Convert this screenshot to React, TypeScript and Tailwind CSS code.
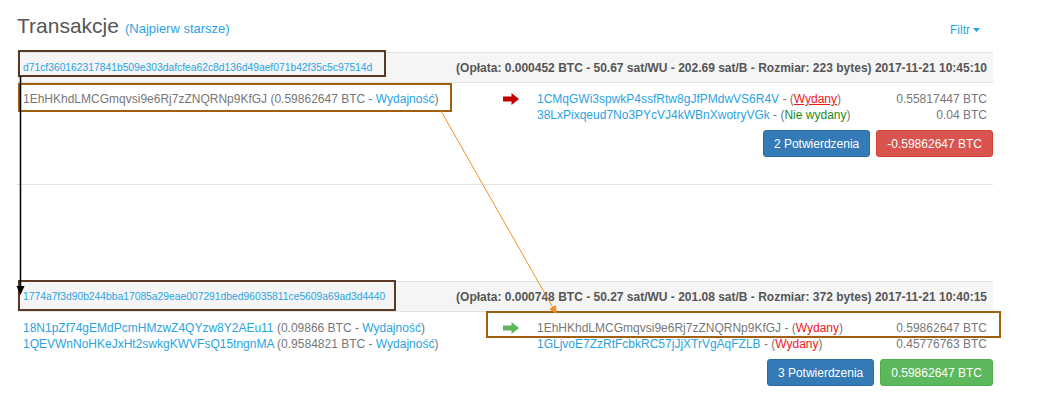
import React from "react";

const LINK = "text-[#2aa3e3]";

type Output = {
  address: string;
  link: boolean;
  spent: boolean;
  underline?: boolean;
  amount: string;
};

type Tx = {
  hash: string;
  meta: string;
  inputs: { address: string; link: boolean; value: string }[];
  outputs: Output[];
  confirmations: string;
  total: string;
  positive: boolean;
};

const TXS: Tx[] = [
  {
    hash: "d71cf360162317841b509e303dafcfea62c8d136d49aef071b42f35c5c97514d",
    meta: "(Opłata: 0.000452 BTC - 50.67 sat/WU - 202.69 sat/B - Rozmiar: 223 bytes) 2017-11-21 10:45:10",
    inputs: [{ address: "1EhHKhdLMCGmqvsi9e6Rj7zZNQRNp9KfGJ", link: false, value: "0.59862647" }],
    outputs: [
      { address: "1CMqGWi3spwkP4ssfRtw8gJfPMdwVS6R4V", link: true, spent: true, underline: true, amount: "0.55817447 BTC" },
      { address: "38LxPixqeud7No3PYcVJ4kWBnXwotryVGk", link: true, spent: false, amount: "0.04 BTC" },
    ],
    confirmations: "2 Potwierdzenia",
    total: "-0.59862647 BTC",
    positive: false,
  },
  {
    hash: "1774a7f3d90b244bba17085a29eae007291dbed96035811ce5609a69ad3d4440",
    meta: "(Opłata: 0.000748 BTC - 50.27 sat/WU - 201.08 sat/B - Rozmiar: 372 bytes) 2017-11-21 10:40:15",
    inputs: [
      { address: "18N1pZf74gEMdPcmHMzwZ4QYzw8Y2AEu11", link: true, value: "0.09866" },
      { address: "1QEVWnNoHKeJxHt2swkgKWVFsQ15tngnMA", link: true, value: "0.9584821" },
    ],
    outputs: [
      { address: "1EhHKhdLMCGmqvsi9e6Rj7zZNQRNp9KfGJ", link: false, spent: true, amount: "0.59862647 BTC" },
      { address: "1GLjvoE7ZzRtFcbkRC57jJjXTrVgAqFZLB", link: true, spent: true, amount: "0.45776763 BTC" },
    ],
    confirmations: "3 Potwierdzenia",
    total: "0.59862647 BTC",
    positive: true,
  },
];

function Arrow({ color }: { color: string }) {
  return (
    <svg width="16" height="12" viewBox="0 0 16 12">
      <path d="M0 3.5H8.5V0L16 6L8.5 12V8.5H0Z" fill={color} />
    </svg>
  );
}

function TxHeader({ tx }: { tx: Tx }) {
  return (
    <div className="flex h-[31px] items-center justify-between border-y border-[#e3e3e3] bg-[#f5f5f5] px-[6px]">
      <span className={`text-[10.3px] ${LINK}`}>{tx.hash}</span>
      <span className="text-[12px] font-bold text-[#555]">{tx.meta}</span>
    </div>
  );
}

function TxBody({ tx }: { tx: Tx }) {
  return (
    <div className="border-b border-[#e3e3e3] pt-[8px] pb-[27px] text-[12px] leading-4">
      <div className="flex">
        <div className="w-[486px] pl-[6px] text-[#777]">
          {tx.inputs.map((i) => (
            <div key={i.address}>
              <span className={i.link ? LINK : ""}>{i.address}</span> ({i.value} BTC -{" "}
              <span className={LINK}>Wydajność</span>)
            </div>
          ))}
        </div>
        <div className="flex w-[34px] items-start pt-[2px]">
          <Arrow color={tx.positive ? "#5cb85c" : "#c40000"} />
        </div>
        <div className="flex-1 pr-[6px] text-[#777]">
          {tx.outputs.map((o) => (
            <div key={o.address} className="flex justify-between">
              <span>
                <span className={o.link ? LINK : ""}>{o.address}</span> - (
                {o.spent ? (
                  <span className={`text-[#f01818] ${o.underline ? "underline decoration-[#f01818]" : ""}`}>Wydany</span>
                ) : (
                  <span className="text-[#1e8a1e]">Nie wydany</span>
                )}
                )
              </span>
              <span>{o.amount}</span>
            </div>
          ))}
        </div>
      </div>
      <div className="mt-[7px] flex justify-end gap-[6px]">
        <span className="flex h-[27px] items-center rounded-[3px] border border-[#2e6da4] bg-[#337ab7] px-[10px] text-white">
          {tx.confirmations}
        </span>
        <span
          className={`flex h-[27px] items-center rounded-[3px] border px-[10px] text-white ${
            tx.positive ? "border-[#4cae4c] bg-[#5cb85c]" : "border-[#d43f3a] bg-[#d9534f]"
          }`}
        >
          {tx.total}
        </span>
      </div>
    </div>
  );
}

function Annotations() {
  return (
    <svg className="pointer-events-none absolute left-0 top-0" width="1056" height="407">
      <defs>
        <marker id="orangeHead" markerWidth="8" markerHeight="8" refX="7" refY="4" orient="auto" markerUnits="userSpaceOnUse">
          <path d="M0 0L8 4L0 8Z" fill="#f0921e" />
        </marker>
      </defs>
      <rect x="19" y="51" width="366" height="25" fill="none" stroke="#5a3a26" strokeWidth="2" />
      <rect x="19" y="84" width="432" height="27" fill="none" stroke="#a0600f" strokeWidth="2" />
      <rect x="19" y="281" width="376" height="29" fill="none" stroke="#5a3a26" strokeWidth="2" />
      <rect x="487" y="312" width="513" height="25" fill="none" stroke="#a0600f" strokeWidth="2" />
      <line x1="441" y1="111" x2="556" y2="313" stroke="#f0921e" strokeWidth="1" markerEnd="url(#orangeHead)" />
      <line x1="20.5" y1="76" x2="20.5" y2="288" stroke="#000" strokeWidth="1.5" />
      <path d="M16.5 286H24.5L20.5 295Z" fill="#000" />
    </svg>
  );
}

export default function App() {
  return (
    <div className="relative h-[407px] w-[1056px] overflow-hidden bg-white font-['Liberation_Sans',Arial,sans-serif]">
      <div className="w-[993px] pl-[17px]">
        <div className="flex h-[52px] items-start justify-between pt-[12px]">
          <div className="flex items-baseline gap-[6px]">
            <span className="text-[21px] leading-[28px] text-[#555]">Transakcje</span>
            <span className={`text-[13px] ${LINK}`}>(Najpierw starsze)</span>
          </div>
          <span className={`mt-[9px] mr-[13px] flex items-center gap-[3px] text-[12px] ${LINK}`}>
            Filtr
            <svg width="7" height="4" viewBox="0 0 7 4">
              <path d="M0 0H7L3.5 4Z" fill="currentColor" />
            </svg>
          </span>
        </div>
        <TxHeader tx={TXS[0]} />
        <TxBody tx={TXS[0]} />
        <div className="h-[96px]" />
        <TxHeader tx={TXS[1]} />
        <TxBody tx={TXS[1]} />
      </div>
      <Annotations />
    </div>
  );
}
